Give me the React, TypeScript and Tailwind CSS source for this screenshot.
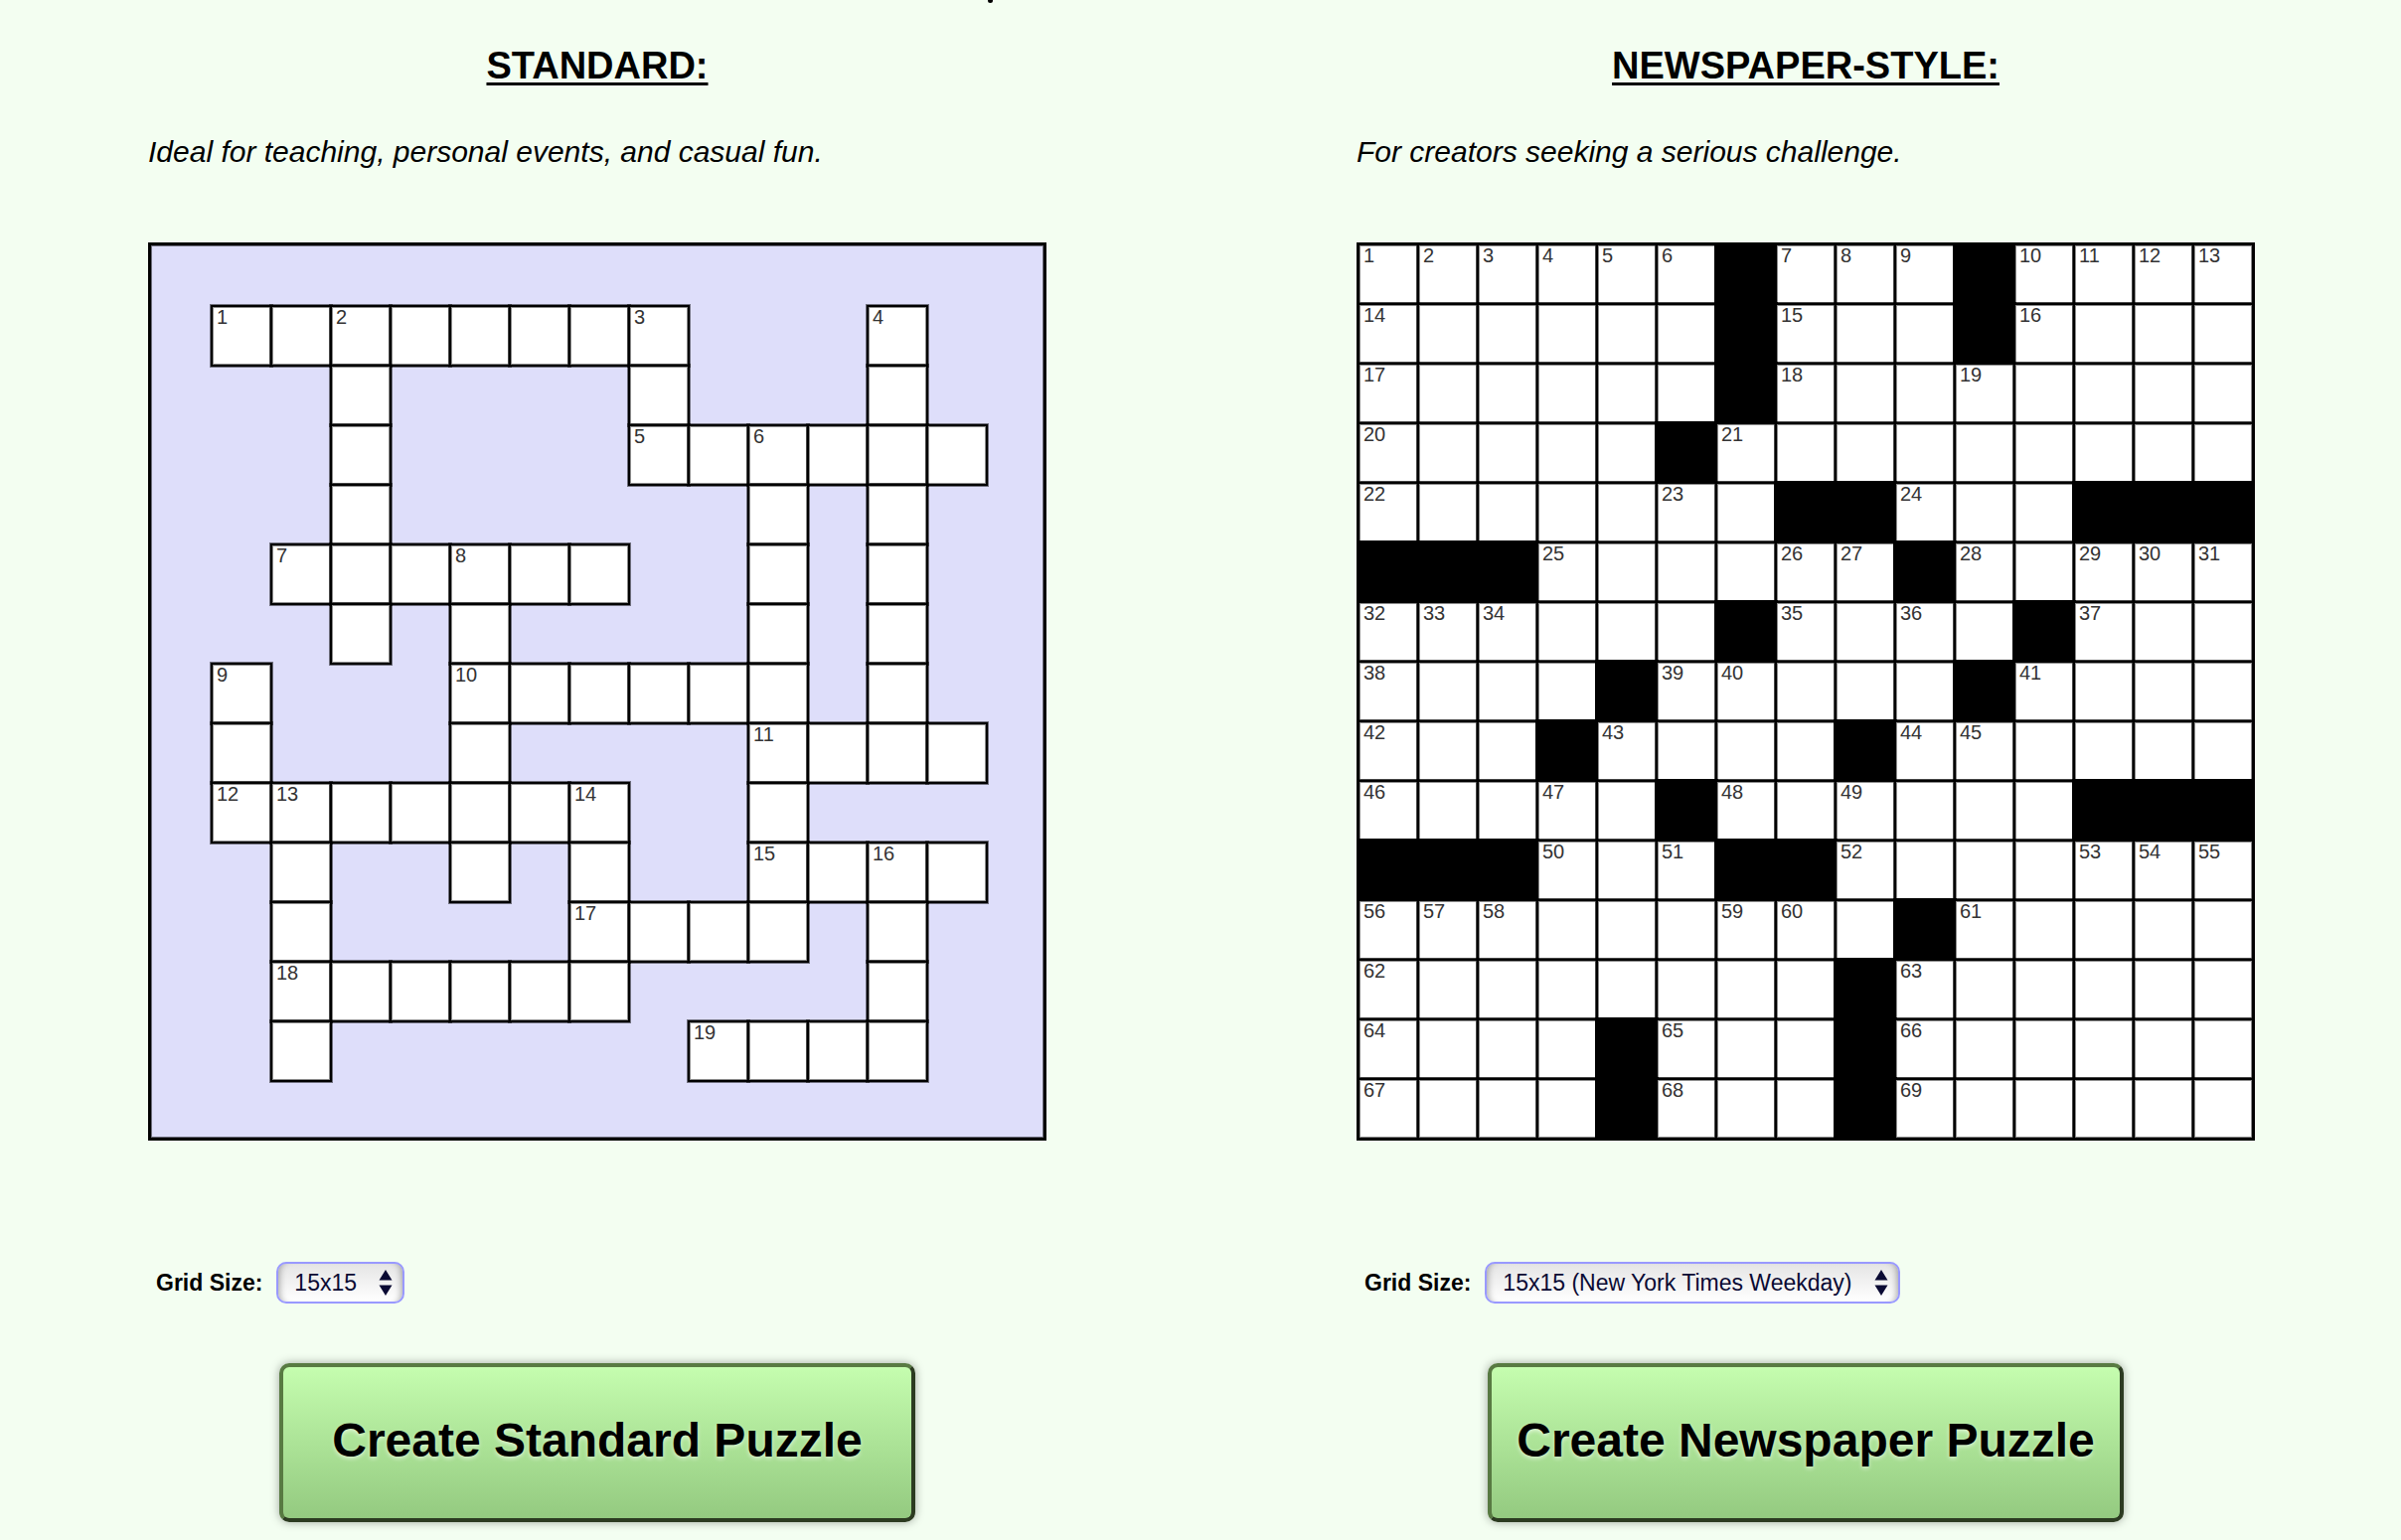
import type { ReactNode } from 'react'

interface PuzzleProps {
  title: string
  tagline: string
  selectId: string
  sizes: string[]
  action: string
  children: ReactNode
}

// '#' is a letter square, '.' is empty background
const standardRows = [
  '...............',
  '.########...#..',
  '...#....#...#..',
  '...#....######.',
  '...#......#.#..',
  '..######..#.#..',
  '...#.#....#.#..',
  '.#...######.#..',
  '.#...#....####.',
  '.#######..#....',
  '..#..#.#..####.',
  '..#....####.#..',
  '..######....#..',
  '..#......####..',
  '...............',
]

const standardNumbers: Record<string, number> = {
  '1-1': 1, '1-3': 2, '1-8': 3, '1-12': 4, '3-8': 5, '3-10': 6, '5-2': 7, '5-5': 8, '7-1': 9, '7-5': 10,
  '8-10': 11, '9-1': 12, '9-2': 13, '9-7': 14, '10-10': 15, '10-12': 16, '11-7': 17, '12-2': 18, '13-9': 19,
}

// '#' is a letter square, 'x' is a block
const newspaperRows = [
  '######x###x####',
  '######x###x####',
  '######x########',
  '#####x#########',
  '#######xx###xxx',
  'xxx######x#####',
  '######x####x###',
  '####x#####x####',
  '###x####x######',
  '#####x######xxx',
  'xxx###xx#######',
  '#########x#####',
  '########x######',
  '####x###x######',
  '####x###x######',
]

// Newspaper grids are numbered wherever an across or down answer starts
function numberGrid(rows: string[]) {
  const numbers: Record<string, number> = {}
  let next = 1
  rows.forEach((row, r) => {
    row.split('').forEach((cell, c) => {
      if (cell !== '#') return
      const startsAcross = row[c - 1] !== '#' && row[c + 1] === '#'
      const startsDown = rows[r - 1]?.[c] !== '#' && rows[r + 1]?.[c] === '#'
      if (startsAcross || startsDown) numbers[`${r}-${c}`] = next++
    })
  })
  return numbers
}

function Cells({ rows, numbers }: { rows: string[]; numbers: Record<string, number> }) {
  return rows.map((row, r) =>
    row.split('').map((cell, c) => {
      const key = `${r}-${c}`
      if (cell === '.') return <div key={key} />
      if (cell === 'x') return <div key={key} className="-m-0.5 bg-black" />
      return (
        <div
          key={key}
          className="-m-px border-2 border-black bg-white pl-1 text-xl leading-[21px] text-[#333] shadow-[0_0_0_1px_rgba(0,0,0,0.5),inset_0_0_0_1px_rgba(0,0,0,0.45)]"
        >
          {numbers[key]}
        </div>
      )
    })
  )
}

function Puzzle({ title, tagline, selectId, sizes, action, children }: PuzzleProps) {
  return (
    <section className="flex flex-col">
      <h2 className="text-center text-[38px] leading-[52px] font-bold underline decoration-3 underline-offset-4">
        {title}
      </h2>
      <p className="mt-[40px] text-3xl leading-[42px] italic">{tagline}</p>

      <div className="mt-[70px]">{children}</div>

      <div className="mt-[122px] flex items-center gap-3.5 pl-2 text-[23px]">
        <label htmlFor={selectId} className="font-bold">
          Grid Size:
        </label>
        <div className="relative">
          <select
            id={selectId}
            className="block h-[42px] appearance-none rounded-[10px] border-2 border-[#9999ff] bg-linear-to-b from-[#e5e5e5] to-white pr-[46px] pl-4 text-[#0a0a33] shadow-[inset_7px_0_7px_-6px_rgba(0,0,0,0.35),inset_-7px_0_7px_-6px_rgba(0,0,0,0.35)]"
          >
            {sizes.map((size) => (
              <option key={size}>{size}</option>
            ))}
          </select>
          <svg className="pointer-events-none absolute top-2 right-3 h-[26px] w-[14px]" viewBox="0 0 14 26" fill="#0a0a33">
            <path d="M7 0L13.5 10.5H.5zM7 26L.5 15.5H13.5z" />
          </svg>
        </div>
      </div>

      <button className="mt-[60px] h-40 w-[640px] max-w-full self-center rounded-[10px] border-4 border-t-[#587a42] border-r-[#2c3b21] border-b-[#2c3b21] border-l-[#587a42] bg-linear-to-b from-[#c5fdaf] to-[#94ca80] pb-1 text-5xl font-bold whitespace-nowrap shadow-[0_0_10px_rgba(0,0,0,0.35)] [text-shadow:0_2px_4px_rgba(255,255,255,0.6)]">
        {action}
      </button>
    </section>
  )
}

export default function App() {
  return (
    <main className="overflow-hidden bg-[#f3fef1] pb-[18px] font-['Liberation_Sans',Arial,sans-serif] text-black">
      <div className="h-10 pl-[994px]">
        <div className="h-[3px] w-[5px] rounded-b-sm bg-black" />
      </div>

      <div className="grid grid-cols-2 gap-[312px] pr-[147px] pl-[149px]">
        <Puzzle
          title="STANDARD:"
          tagline="Ideal for teaching, personal events, and casual fun."
          selectId="standard-size"
          sizes={['15x15']}
          action="Create Standard Puzzle"
        >
          <div className="grid aspect-square grid-cols-[repeat(14,60fr)_56fr] grid-rows-[repeat(14,60fr)_56fr] border-[3px] border-black bg-[#dedefa] p-px shadow-[inset_0_0_0_1px_rgba(0,0,0,0.5)]">
            <Cells rows={standardRows} numbers={standardNumbers} />
          </div>
        </Puzzle>

        <Puzzle
          title="NEWSPAPER-STYLE:"
          tagline="For creators seeking a serious challenge."
          selectId="newspaper-size"
          sizes={['15x15 (New York Times Weekday)']}
          action="Create Newspaper Puzzle"
        >
          <div className="grid aspect-square grid-cols-[repeat(15,1fr)] grid-rows-[repeat(15,1fr)] border-2 border-black bg-white">
            <Cells rows={newspaperRows} numbers={numberGrid(newspaperRows)} />
          </div>
        </Puzzle>
      </div>
    </main>
  )
}
